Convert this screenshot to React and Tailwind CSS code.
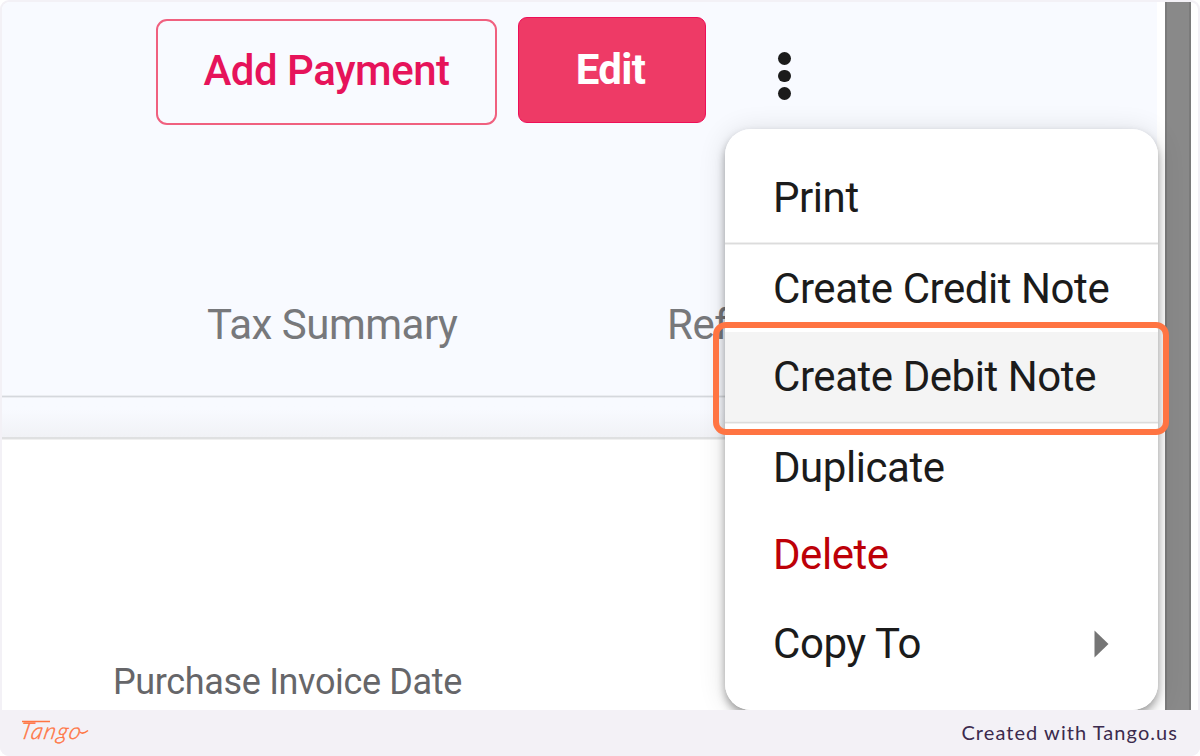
function MenuItem({ label, className = "", children }) {
    return (
        <button
            className={`flex w-full items-center justify-between pl-[48px] pr-[49px] text-left text-[42px] leading-none tracking-[-0.44px] whitespace-nowrap ${className}`}
        >
            <span>{label}</span>
            {children}
        </button>
    );
}

function Divider() {
    return <div className="h-[3px] shrink-0 border-y border-[#efefef] bg-[#dcdcdc]" />;
}

function ActionMenu() {
    return (
        <div className="absolute left-[723px] top-[127px] flex h-[581px] w-[433px] flex-col overflow-hidden rounded-[26px] bg-white pt-[23px] text-[#1b1b1b]">
            <MenuItem label="Print" className="h-[90px] pt-[2px]" />
            <Divider />
            <MenuItem label="Create Credit Note" className="h-[87px]" />
            <MenuItem label="Create Debit Note" className="h-[89px] bg-[#f4f4f4]" />
            <Divider />
            <MenuItem label="Duplicate" className="h-[87px]" />
            <MenuItem label="Delete" className="h-[88px] text-[#bd0008]" />
            <MenuItem label="Copy To" className="h-[89px] pt-[1px]">
                <svg width="15" height="28" viewBox="0 0 15 28" fill="#757575">
                    <path d="M0.5 0.5L14.5 14L0.5 27.5Z" />
                </svg>
            </MenuItem>
        </div>
    );
}

function Footer() {
    return (
        <footer className="flex h-[46px] items-center justify-between bg-[#f3f1f6] pl-[20px] pr-[22px]">
            <div className="relative h-[34px] w-[70px] text-[#ff7442]">
                <span className="absolute left-[1px] top-[-3px] -skew-x-12 font-['Lato'] text-[23px] font-light italic leading-[34px] tracking-[1.3px] [-webkit-text-stroke:0.4px_#ff7442]">
                    Tango
                </span>
                <svg className="absolute inset-0" width="70" height="34" fill="none" stroke="currentColor" strokeWidth="1.5">
                    <path d="M2 5.6H30M60 16C62 18 65 17 68 14.5" />
                </svg>
            </div>
            <p className="pb-[3px] font-['Lato'] text-[20px] tracking-[1.06px] text-[#3b2a4d]">Created with Tango.us</p>
        </footer>
    );
}

export default function App() {
    return (
        <div className="h-[756px] w-[1200px] overflow-hidden rounded-[9px] bg-[#f3f1f6] font-['Roboto',sans-serif]">
            <main className="relative mx-[2px] flex h-[710px] flex-col pt-[2px]">
                <div className="relative flex h-[708px] overflow-hidden rounded-t-[8px] bg-white">
                    <section className="flex w-[1155px] flex-col">
                        <header className="flex h-[393px] flex-col bg-[#f8faff]">
                            <div className="flex items-start pl-[154px] pt-[15px]">
                                <button className="mt-[2px] h-[106px] w-[341px] rounded-[11px] border-2 border-[#f0607f] pb-[3px] text-[42px] font-medium leading-none tracking-[-0.5px] text-[#e6135a]">
                                    Add Payment
                                </button>
                                <button className="ml-[21px] h-[106px] w-[188px] rounded-[9px] border border-[#ee0e58] bg-[#ee3a66] pr-[3px] text-[42px] font-bold leading-none tracking-[-0.7px] text-white">
                                    Edit
                                </button>
                                <div className="ml-[72px] mt-[35px] flex flex-col gap-[5px]">
                                    <i className="h-[12.5px] w-[12.5px] rounded-full bg-[#1b1b1b]" />
                                    <i className="h-[12.5px] w-[12.5px] rounded-full bg-[#1b1b1b]" />
                                    <i className="h-[12.5px] w-[12.5px] rounded-full bg-[#1b1b1b]" />
                                </div>
                            </div>
                            <nav className="mt-[178px] flex text-[42px] leading-[44px] tracking-[-0.5px] text-[#77787b]">
                                <span className="ml-[205px] w-[460px]">Tax Summary</span>
                                <span>Ref</span>
                            </nav>
                        </header>
                        <div className="h-[3px] border-y border-[#ebedf1] bg-[#d5d8dd]" />
                        <div className="h-[39px] bg-linear-to-b from-[#f8faff] from-30% to-[#f1f2f6]" />
                        <div className="h-[3px] border-b border-[#f0f0f0] bg-[#dfe0e1]" />
                        <div className="flex-1 bg-white pl-[111px] pt-[222px] text-[36px] leading-[40px] tracking-[-0.35px] text-[#666669]">
                            Purchase Invoice Date
                        </div>
                    </section>
                    <div className="ml-[8px] w-[26px] border-x-2 border-[#7b7b7b] bg-[#898989]" />
                    <div className="absolute left-[723px] top-[127px] h-[581px] w-[433px] rounded-[26px] shadow-[0_5px_9px_rgba(0,0,0,0.35),0_2px_28px_rgba(0,0,0,0.12)]" />
                    <ActionMenu />
                </div>
                <div className="absolute left-[711px] top-[322px] h-[113px] w-[456px] rounded-[13px] border-[6px] border-[#ff7442]" />
            </main>
            <Footer />
        </div>
    );
}
